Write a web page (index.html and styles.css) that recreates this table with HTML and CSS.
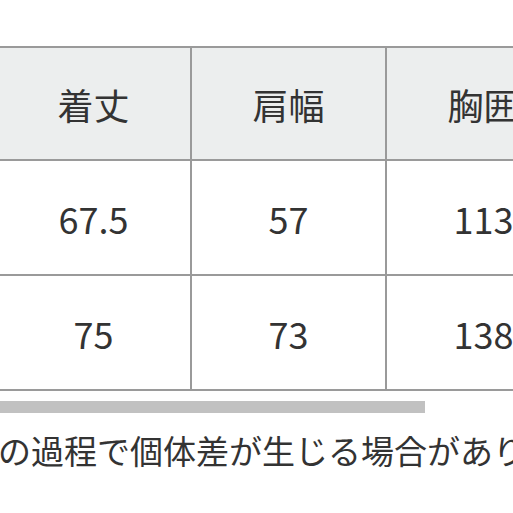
FILE: index.html
```html
<!DOCTYPE html>
<html lang="ja">
<head>
<meta charset="utf-8">
<link rel="stylesheet" href="styles.css">
</head>
<body>
<div class="page">
  <div class="table">
    <div class="cell head">着丈</div>
    <div class="cell head">肩幅</div>
    <div class="cell head">胸囲</div>
    <div class="cell">67.5</div>
    <div class="cell">57</div>
    <div class="cell">113</div>
    <div class="cell">75</div>
    <div class="cell">73</div>
    <div class="cell">138</div>
  </div>
  <div class="scroll"><div class="thumb"></div></div>
  <p class="note">の過程で個体差が生じる場合があります。</p>
</div>
</body>
</html>
```

FILE: styles.css
```css
html, body {
  margin: 0;
  padding: 0;
  background: #ffffff;
}
.page {
  width: 513px;
  height: 513px;
  overflow: hidden;
  padding-top: 46px;
  box-sizing: border-box;
  font-family: "Noto Sans CJK JP", "Noto Sans", sans-serif;
  color: #333333;
}
.table {
  display: grid;
  grid-template-columns: repeat(3, 193px);
  grid-template-rows: 111px 113px 113px;
  gap: 2px;
  padding: 2px;
  background: #9a9a9a;
  width: max-content;
  margin-left: -5px;
}
.cell {
  background: #ffffff;
  display: flex;
  align-items: center;
  justify-content: center;
  font-size: 36px;
  line-height: 1;
}
.cell.head {
  background: #eceeee;
}
.scroll {
  margin-top: 10px;
  height: 12px;
}
.thumb {
  width: 425px;
  height: 12px;
  background: #c1c1c1;
}
.note {
  margin: 15px 0 0 -2px;
  font-size: 33px;
  line-height: 44px;
  white-space: nowrap;
}
```
